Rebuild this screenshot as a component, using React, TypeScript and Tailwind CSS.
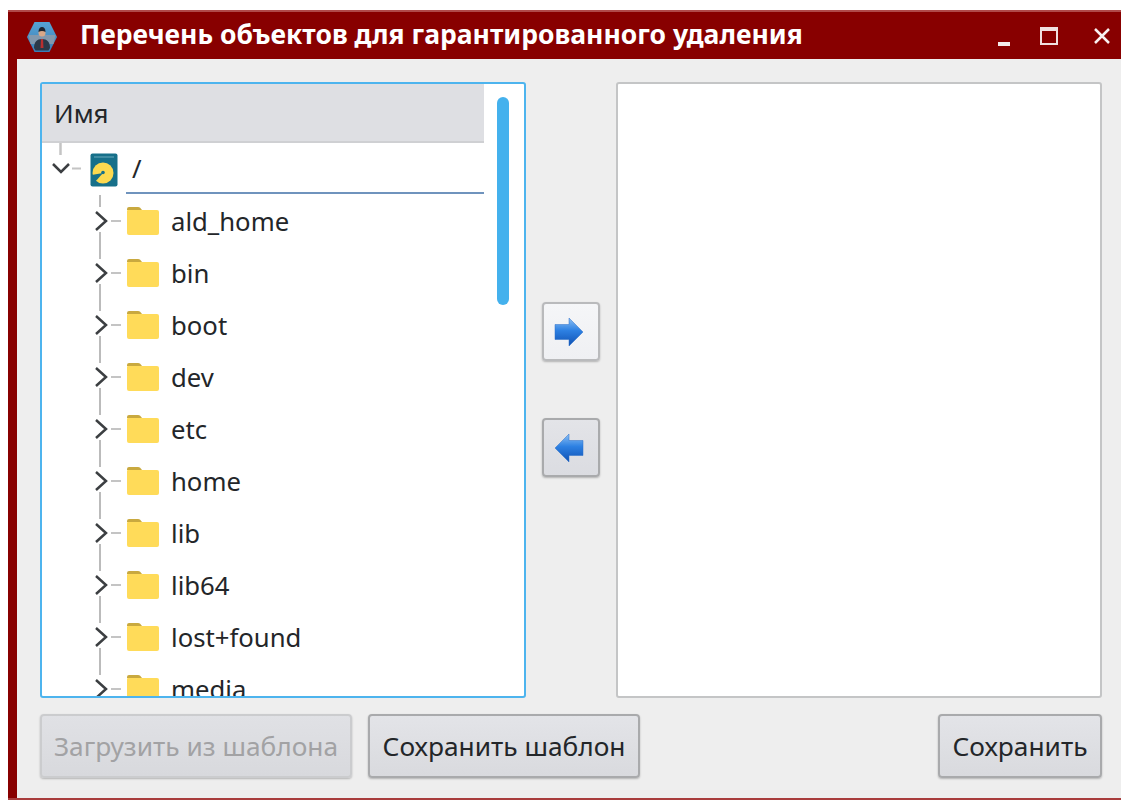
import type { ReactNode } from "react";

const folders = [
  "ald_home",
  "bin",
  "boot",
  "dev",
  "etc",
  "home",
  "lib",
  "lib64",
  "lost+found",
  "media",
];

// Logo of the app: blue hexagon with a figure in a suit
function AppIcon() {
  return (
    <svg width="32" height="32" viewBox="0 0 32 32" className="mt-[3px] shrink-0">
      <defs>
        <linearGradient id="hexFill" x1="0" y1="0" x2="0" y2="1">
          <stop offset="0" stopColor="#56a3d4" />
          <stop offset="1" stopColor="#3a7db6" />
        </linearGradient>
      </defs>
      <path d="M8.500 1h15L31 16l-7.500 15h-15L1 16z" fill="url(#hexFill)" />
      <path d="M2.500 14h27l-2 9h-23z" fill="#8298ad" />
      <path d="M8 27c0-6 3-9 8-9s8 3 8 9l-1.500 2.500h-13z" fill="#2b3949" />
      <path d="M15 18h2l.5 9h-3z" fill="#b92f2f" />
      <circle cx="16" cy="12" r="3.500" fill="#d9a888" />
      <path d="M12.500 11c0-3.500 1.500-5 3.500-5s3.500 1.500 3.500 5c-2-1.200-5-1.200-7 0z" fill="#1c2530" />
    </svg>
  );
}

function DiskIcon() {
  return (
    <svg width="28" height="34" viewBox="0 0 28 34">
      <rect x="0.500" y="0.500" width="27" height="33" rx="2" fill="#17708a" />
      <circle cx="13" cy="20" r="10.500" fill="#fdd94f" />
      <path d="M13 20L1.500 22 5 29z" fill="#17708a" />
      <circle cx="13" cy="19.500" r="1.800" fill="#17708a" />
      <path d="M4 4h20" stroke="#4f97ab" strokeWidth="1.500" />
    </svg>
  );
}

function FolderIcon() {
  return (
    <svg width="32" height="32" viewBox="0 1 32 32" className="shrink-0">
      <path d="M0 5a2 2 0 0 1 2-2h9c2 0 2.500 1 4 3H0z" fill="#c9a93f" />
      <path d="M0 7a1 1 0 0 1 1-1h29a2 2 0 0 1 2 2v21a2 2 0 0 1-2 2H2a2 2 0 0 1-2-2z" fill="#ffdb59" />
    </svg>
  );
}

// Tree guide for a folder row: trunk, expander and stub
function FolderBranch() {
  return (
    <svg width="85" height="52" viewBox="0 0 85 52" className="shrink-0">
      <path d="M58 0v12M58 37v15" stroke="#bbbbbb" strokeWidth="2" fill="none" />
      <path d="M54 17l10 9-10 9" stroke="#3c3f42" strokeWidth="2.500" fill="none" />
      <path d="M69 26h10" stroke="#c4c4c4" strokeWidth="2" fill="none" />
    </svg>
  );
}

function RootBranch() {
  return (
    <svg width="48" height="52" viewBox="0 0 48 52" className="shrink-0">
      <path d="M18.500 0v12" stroke="#c4c4c4" strokeWidth="2.500" fill="none" />
      <path d="M11 21l8 8 8-8" stroke="#3c3f42" strokeWidth="2.500" fill="none" />
      <path d="M30 25.500h9" stroke="#c4c4c4" strokeWidth="2" fill="none" />
    </svg>
  );
}

function Arrow({ left }: { left?: boolean }) {
  const id = left ? "arrowLeft" : "arrowRight";
  return (
    <svg
      width="30"
      height="30"
      viewBox="0 0 30 30"
      className={left ? "-translate-x-0.5 -scale-x-100" : "-translate-x-0.5"}
    >
      <defs>
        <linearGradient id={id} x1="0" y1="0" x2="0" y2="1">
          <stop offset="0" stopColor="#8cc0f4" />
          <stop offset="0.45" stopColor="#2d80e2" />
          <stop offset="1" stopColor="#0f50b2" />
        </linearGradient>
      </defs>
      <path
        d="M1 7.500h14V1l14 14-14 14v-6.500H1z"
        fill={`url(#${id})`}
        stroke="#2a6fc8"
        strokeWidth="0.500"
        strokeLinejoin="round"
      />
    </svg>
  );
}

function PushButton({
  children,
  className,
  disabled,
}: {
  children: ReactNode;
  className: string;
  disabled?: boolean;
}) {
  return (
    <button
      disabled={disabled}
      className={`flex items-center justify-center rounded-[4px] border-2 bg-linear-to-b text-[26.3px] shadow-[0_1px_2px_rgba(0,0,0,0.25)] ${className}`}
    >
      {children}
    </button>
  );
}

export default function App() {
  return (
    <div className="h-[801px] w-[1121px] overflow-hidden bg-white pl-2 pt-[10px] font-['Noto_Sans',sans-serif] text-[25.7px] text-[#232629]">
      <div className="flex h-[790px] flex-col border-t-2 border-b-2 border-t-[#b04a4a] border-b-[#a83c3c] bg-[#880000]">
        {/* title bar */}
        <div className="flex h-[47px] shrink-0 items-center pl-[18px] text-white">
          <AppIcon />
          <span className="ml-[22px] -translate-y-[1px] text-[26.5px] font-bold leading-none">
            Перечень объектов для гарантированного удаления
          </span>
          <div className="ml-auto flex items-center">
            <div className="mt-[16px] h-[4px] w-[12px] bg-[#f4eaea]" />
            <div className="ml-[30px] h-[18px] w-[18px] border-2 border-t-[4px] border-[#f0e0e0]" />
            <svg width="18" height="16" viewBox="0 0 18 16" className="ml-[35px] mr-[10px]">
              <path d="M2 1l14 14M16 1L2 15" stroke="#f8f0f0" strokeWidth="2.500" />
            </svg>
          </div>
        </div>

        {/* dialog body */}
        <div className="ml-[9px] flex-1 bg-[#eeeeee] pl-[23px] pr-[19px] pt-[23px]">
          <div className="flex h-[616px]">
            <div className="relative h-full w-[486px] shrink-0 overflow-hidden rounded-[3px] border-2 border-[#4db4ee] bg-white">
              <div className="flex h-[59px] w-[442px] items-center border-b-2 border-[#cfd0d3] bg-[#dedfe3] pl-[12px] pt-[2px] text-[26px]">
                Имя
              </div>
              <div className="flex h-[52px] w-[442px]">
                <RootBranch />
                <div className="flex h-[34px] translate-y-[10px] items-center">
                  <DiskIcon />
                </div>
                <div className="ml-2 flex h-[51px] flex-1 items-center border-b-2 border-[#6f93bd] pl-[6px] pt-[3px]">
                  /
                </div>
              </div>
              {folders.map((name) => (
                <div key={name} className="flex h-[52px] items-center">
                  <FolderBranch />
                  <FolderIcon />
                  <span className="ml-3 pt-[2px]">{name}</span>
                </div>
              ))}
              {/* scrollbar */}
              <div className="absolute left-[455px] top-[13px] h-[208px] w-[12px] rounded-full bg-[#44b1ed]" />
            </div>

            <div className="flex w-[90px] shrink-0 flex-col items-center justify-center gap-[57px] pb-px">
              <PushButton className="h-[59px] w-[58px] border-[#b9babc] from-[#f5f6f8] to-[#eff0f3]">
                <Arrow />
              </PushButton>
              <PushButton className="h-[59px] w-[58px] border-[#a9aaac] from-[#e3e4e8] to-[#dbdce1]">
                <Arrow left />
              </PushButton>
            </div>

            <div className="h-full flex-1 rounded-[3px] border-2 border-[#c4c5c6] bg-white" />
          </div>

          {/* footer buttons */}
          <div className="mt-[16px] flex gap-4">
            <PushButton
              disabled
              className="h-[64px] w-[312px] border-[#cbccce] from-[#e0e1e5] to-[#d8d9dd] pt-[2px] text-[#a2a2a4]"
            >
              Загрузить из шаблона
            </PushButton>
            <PushButton className="h-[64px] w-[272px] border-[#a9aaac] from-[#e3e4e8] to-[#d9dade] pt-[2px]">
              Сохранить шаблон
            </PushButton>
            <PushButton className="ml-auto h-[64px] w-[164px] border-[#a9aaac] from-[#e3e4e8] to-[#d9dade] pt-[2px]">
              Сохранить
            </PushButton>
          </div>
        </div>
      </div>
    </div>
  );
}
